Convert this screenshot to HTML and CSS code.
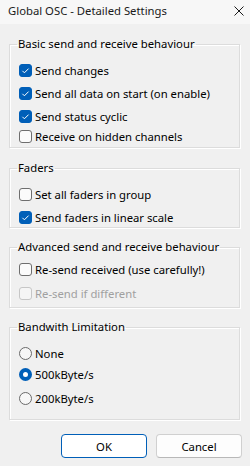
FILE: index.html
```html
<!DOCTYPE html>
<html>
<head>
<meta charset="utf-8">
<link rel="stylesheet" href="styles.css">
</head>
<body>
<div class="window">
  <div class="titlebar">
    <span class="title">Global OSC - Detailed Settings</span>
    <svg class="close" width="10" height="10" viewBox="0 0 10 10"><path d="M0.5 0.5 L9.5 9.5 M9.5 0.5 L0.5 9.5" stroke="#1a1a1a" stroke-width="1" fill="none"/></svg>
  </div>
  <div class="content">
    <fieldset class="group g1">
      <legend>Basic send and receive behaviour</legend>
      <div class="row r1"><span class="cb on"><svg viewBox="0 0 13 13"><path d="M3.4 6.8 L5.4 8.8 L9.6 4.6" stroke="#fff" stroke-width="1" fill="none"/></svg></span><span class="lbl">Send changes</span></div>
      <div class="row r2"><span class="cb on"><svg viewBox="0 0 13 13"><path d="M3.4 6.8 L5.4 8.8 L9.6 4.6" stroke="#fff" stroke-width="1" fill="none"/></svg></span><span class="lbl">Send all data on start (on enable)</span></div>
      <div class="row r3"><span class="cb on"><svg viewBox="0 0 13 13"><path d="M3.4 6.8 L5.4 8.8 L9.6 4.6" stroke="#fff" stroke-width="1" fill="none"/></svg></span><span class="lbl">Send status cyclic</span></div>
      <div class="row r4"><span class="cb"></span><span class="lbl">Receive on hidden channels</span></div>
    </fieldset>
    <fieldset class="group g2">
      <legend>Faders</legend>
      <div class="row r1"><span class="cb"></span><span class="lbl">Set all faders in group</span></div>
      <div class="row r2"><span class="cb on"><svg viewBox="0 0 13 13"><path d="M3.4 6.8 L5.4 8.8 L9.6 4.6" stroke="#fff" stroke-width="1" fill="none"/></svg></span><span class="lbl">Send faders in linear scale</span></div>
    </fieldset>
    <fieldset class="group g3">
      <legend>Advanced send and receive behaviour</legend>
      <div class="row r1"><span class="cb"></span><span class="lbl">Re-send received (use carefully!)</span></div>
      <div class="row r2 disabled"><span class="cb"></span><span class="lbl">Re-send if different</span></div>
    </fieldset>
    <fieldset class="group g4">
      <legend>Bandwith Limitation</legend>
      <div class="row r1"><span class="rb"></span><span class="lbl">None</span></div>
      <div class="row r2"><span class="rb on"></span><span class="lbl">500kByte/s</span></div>
      <div class="row r3"><span class="rb"></span><span class="lbl">200kByte/s</span></div>
    </fieldset>
    <div class="buttons">
      <button class="btn default">OK</button>
      <button class="btn">Cancel</button>
    </div>
  </div>
</div>
</body>
</html>
```
FILE: styles.css
```css
html, body {
  margin: 0;
  padding: 0;
}
body {
  width: 250px;
  height: 466px;
  background: #f0f0f0;
  font-family: "Noto Sans", "Liberation Sans", sans-serif;
  font-size: 11.3px;
  color: #000;
  overflow: hidden;
}
.window {
  display: flex;
  flex-direction: column;
}
.titlebar {
  height: 24px;
  background: #f7f7f7;
  display: flex;
  align-items: center;
  justify-content: space-between;
  padding: 0 6px 3px 8px;
  box-sizing: border-box;
}
.title {
  color: #1a1a1a;
  line-height: 16px;
}
.close {
  display: block;
}
.content {
  display: flex;
  flex-direction: column;
  padding: 12px 0 0 9px;
}
.group {
  margin: 0 0 11px 0;
  width: 231px;
  box-sizing: border-box;
  border: 1px solid #dcdcdc;
  padding: 12px 0 3px 9px;
  box-shadow: 1px 1px 0 #fff, inset 1px 1px 0 #fff;
}
.group legend {
  padding: 0 1px;
  margin-left: -2px;
  line-height: 16px;
}
.row {
  display: flex;
  align-items: center;
  height: 13px;
  line-height: 13px;
  white-space: nowrap;
}
.g1 { padding-bottom: 4px; margin-bottom: 12px; }
.g1 .r2, .g1 .r3 { margin-top: 10px; }
.g1 .r4 { margin-top: 7px; }
.g2 .r2 { margin-top: 10px; }
.g3 { padding-top: 8px; padding-bottom: 7px; }
.g3 .r2 { margin-top: 11px; }
.g4 .r2 { margin-top: 8px; }
.g4 .r3 { margin-top: 11px; }
.g4 { padding-bottom: 14px; margin-bottom: 14px; }
.lbl { margin-left: 3px; }
.cb {
  width: 13px;
  height: 13px;
  box-sizing: border-box;
  border: 1px solid #6e6e6e;
  border-radius: 3px;
  background: #fbfbfb;
  flex: none;
  display: block;
}
.cb.on {
  background: #005fb8;
  border-color: #005fb8;
}
.cb svg {
  display: block;
  width: 13px;
  height: 13px;
  margin: -1px;
}
.disabled .cb { border-color: #c6c6c6; background: #f5f5f5; }
.disabled .lbl { color: #a0a0a0; }
.rb {
  width: 13px;
  height: 13px;
  box-sizing: border-box;
  border: 1px solid #6a6a6a;
  border-radius: 50%;
  background: #f7f7f7;
  flex: none;
  display: block;
}
.rb.on {
  border: 4px solid #005fb8;
  background: #fff;
}
.buttons {
  display: flex;
  justify-content: flex-end;
  gap: 9px;
  padding-right: 8px;
}
.btn {
  width: 86px;
  height: 24px;
  box-sizing: border-box;
  border: 1px solid #d0d0d0;
  border-bottom-color: #b8b8b8;
  border-radius: 4px;
  background: #fdfdfd;
  font-family: inherit;
  font-size: 11.3px;
  color: #000;
  padding: 0;
}
.btn.default {
  border: 1px solid #005fb8;
  background: #fff;
}
```
